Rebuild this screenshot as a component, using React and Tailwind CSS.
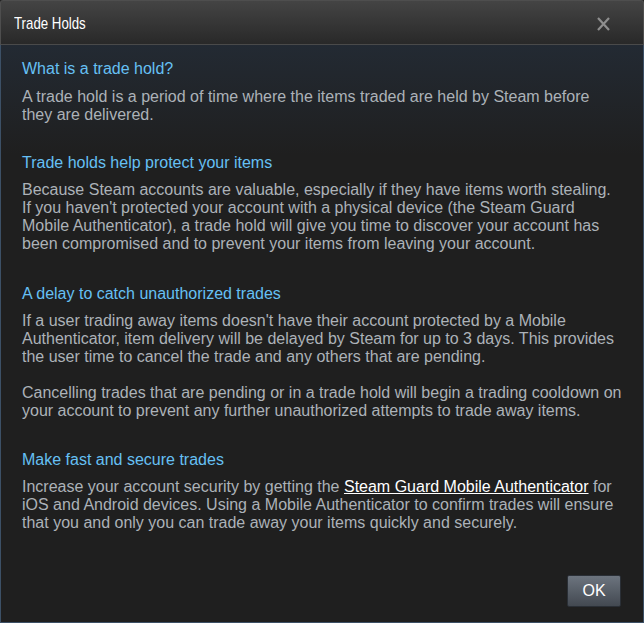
export default function App() {
  const font = { fontFamily: '"Liberation Sans", Arial, sans-serif' };
  return (
    <div className="w-[644px] h-[623px] flex flex-col bg-[#1f1f1f]" style={font}>
      <div className="h-[45px] shrink-0 flex items-center justify-between rounded-t-[3px] border border-b-0 border-[#4e4e4e] bg-[linear-gradient(to_bottom,#444444,#282828)] pl-[13px] pr-[33px] relative">
        <span className="inline-block origin-left scale-x-[0.78] text-white text-[17px] leading-none">Trade Holds</span>
        <svg width="13" height="14" viewBox="0 0 13 14" className="mt-[1px]">
          <path d="M1 1 L12 13 M12 1 L1 13" stroke="#8e8e8e" strokeWidth="2.2" fill="none" />
        </svg>
        <div className="absolute left-0 right-0 bottom-0 h-px bg-[#4a4a4a]" />
      </div>
      <div className="flex-1 flex flex-col border border-t-0 border-[#3c5066] bg-[linear-gradient(to_bottom,#232a33_0px,#1f1f1f_110px)] pl-[21px] pr-[20px] pt-[15px] text-[16px] leading-[18px]">
        <section>
          <h2 className="text-[#66c0f4] text-[16px] leading-[18px] mb-[10px]">What is a trade hold?</h2>
          <p className="text-[#acb2b8]">A trade hold is a period of time where the items traded are held by Steam before they are delivered.</p>
        </section>
        <section className="mt-[30px]">
          <h2 className="text-[#66c0f4] text-[16px] leading-[18px] mb-[9px]">Trade holds help protect your items</h2>
          <p className="text-[#acb2b8]">Because Steam accounts are valuable, especially if they have items worth stealing. If you haven't protected your account with a physical device (the Steam Guard Mobile Authenticator), a trade hold will give you time to discover your account has been compromised and to prevent your items from leaving your account.</p>
        </section>
        <section className="mt-[32px]">
          <h2 className="text-[#66c0f4] text-[16px] leading-[18px] mb-[9px]">A delay to catch unauthorized trades</h2>
          <p className="text-[#acb2b8]">If a user trading away items doesn't have their account protected by a Mobile Authenticator, item delivery will be delayed by Steam for up to 3 days. This provides the user time to cancel the trade and any others that are pending.</p>
          <p className="text-[#acb2b8] mt-[18px]">Cancelling trades that are pending or in a trade hold will begin a trading cooldown on your account to prevent any further unauthorized attempts to trade away items.</p>
        </section>
        <section className="mt-[31px]">
          <h2 className="text-[#66c0f4] text-[16px] leading-[18px] mb-[9px]">Make fast and secure trades</h2>
          <p className="text-[#acb2b8]">Increase your account security by getting the <a className="text-white underline">Steam Guard Mobile Authenticator</a> for iOS and Android devices. Using a Mobile Authenticator to confirm trades will ensure that you and only you can trade away your items quickly and securely.</p>
        </section>
        <div className="flex-1" />
        <div className="flex justify-end mb-[15px] mr-[2px]">
          <button className="w-[54px] h-[32px] rounded-[2px] border border-[#2a2f36] bg-[linear-gradient(to_bottom,#6c747e,#434951)] text-white text-[16px] leading-none">OK</button>
        </div>
      </div>
    </div>
  );
}
